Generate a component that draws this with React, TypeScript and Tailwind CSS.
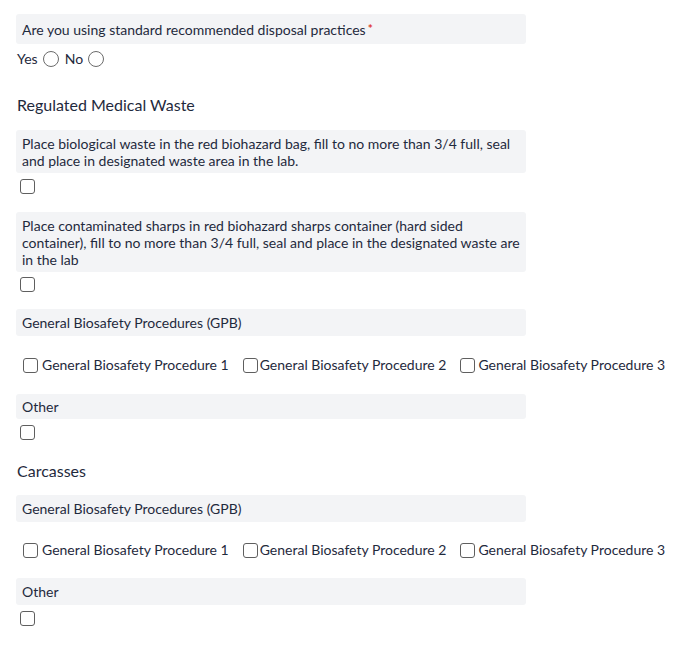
import React from "react";

const Box = ({ children, className = "" }: { children: React.ReactNode; className?: string }) => (
  <div className={`w-[510px] rounded-[3px] bg-[#f3f4f6] px-[6px] leading-[17px] ${className}`}>{children}</div>
);

const Check = ({ className = "" }: { className?: string }) => (
  <span className={`inline-block h-[15px] w-[15px] shrink-0 rounded-[3px] border border-[#5f5f5f] bg-white ${className}`} />
);

const Radio = ({ className = "" }: { className?: string }) => (
  <span className={`inline-block h-[16px] w-[16px] shrink-0 rounded-full border border-[#6b6b6b] bg-white ${className}`} />
);

const ProcRow = ({ className = "" }: { className?: string }) => (
  <div className={`flex h-[16px] items-center leading-[16px] ${className}`}>
    <Check className="ml-[7px]" />
    <span className="ml-[4px]">General Biosafety Procedure 1</span>
    <Check className="ml-[14px]" />
    <span className="ml-[2px]">General Biosafety Procedure 2</span>
    <Check className="ml-[14px]" />
    <span className="ml-[3px]">General Biosafety Procedure 3</span>
  </div>
);

export default function App() {
  return (
    <div
      className="min-h-[652px] w-[694px] bg-white pl-4 pt-[14px] text-[14px] text-[#1f2a3d]"
      style={{ fontFamily: "Lato, 'Open Sans', sans-serif" }}
    >
      <div className="flex h-[30px] w-[510px] items-center rounded-[3px] bg-[#f3f4f6] px-[6px]">
        <span>Are you using standard recommended disposal practices</span>
        <span className="relative top-0 ml-[2px] text-[12px] font-bold leading-[10px] text-[#e0392b]">*</span>
      </div>

      <div className="mt-[7px] flex h-[16px] items-center pl-[1px] leading-[16px]">
        <span>Yes</span>
        <Radio className="ml-[5px]" />
        <span className="ml-[6px]">No</span>
        <Radio className="ml-[5px]" />
      </div>

      <div className="mt-[28px] pl-[1px] text-[16px] leading-[20px]">Regulated Medical Waste</div>

      <Box className="mt-[15px] py-[4.5px]">
        Place biological waste in the red biohazard bag, fill to no more than 3/4 full, seal and place in designated
        waste area in the lab.
      </Box>
      <div className="mt-[6px] flex">
        <Check className="ml-[4px]" />
      </div>

      <Box className="mt-[18px] py-[4.5px]">
        Place contaminated sharps in red biohazard sharps container (hard sided container), fill to no more than 3/4
        full, seal and place in the designated waste are in the lab
      </Box>
      <div className="mt-[5px] flex">
        <Check className="ml-[4px]" />
      </div>

      <Box className="mt-[17px] py-[5px]">General Biosafety Procedures (GPB)</Box>
      <ProcRow className="mt-[21px]" />

      <Box className="mt-[21px] py-[4px]">Other</Box>
      <div className="mt-[6px] flex">
        <Check className="ml-[4px]" />
      </div>

      <div className="mt-[21px] pl-[1px] text-[16px] leading-[20px]">Carcasses</div>

      <Box className="mt-[14px] py-[5px]">General Biosafety Procedures (GPB)</Box>
      <ProcRow className="mt-[20px]" />

      <Box className="mt-[20px] py-[5px]">Other</Box>
      <div className="mt-[6px] flex">
        <Check className="ml-[4px]" />
      </div>
    </div>
  );
}
